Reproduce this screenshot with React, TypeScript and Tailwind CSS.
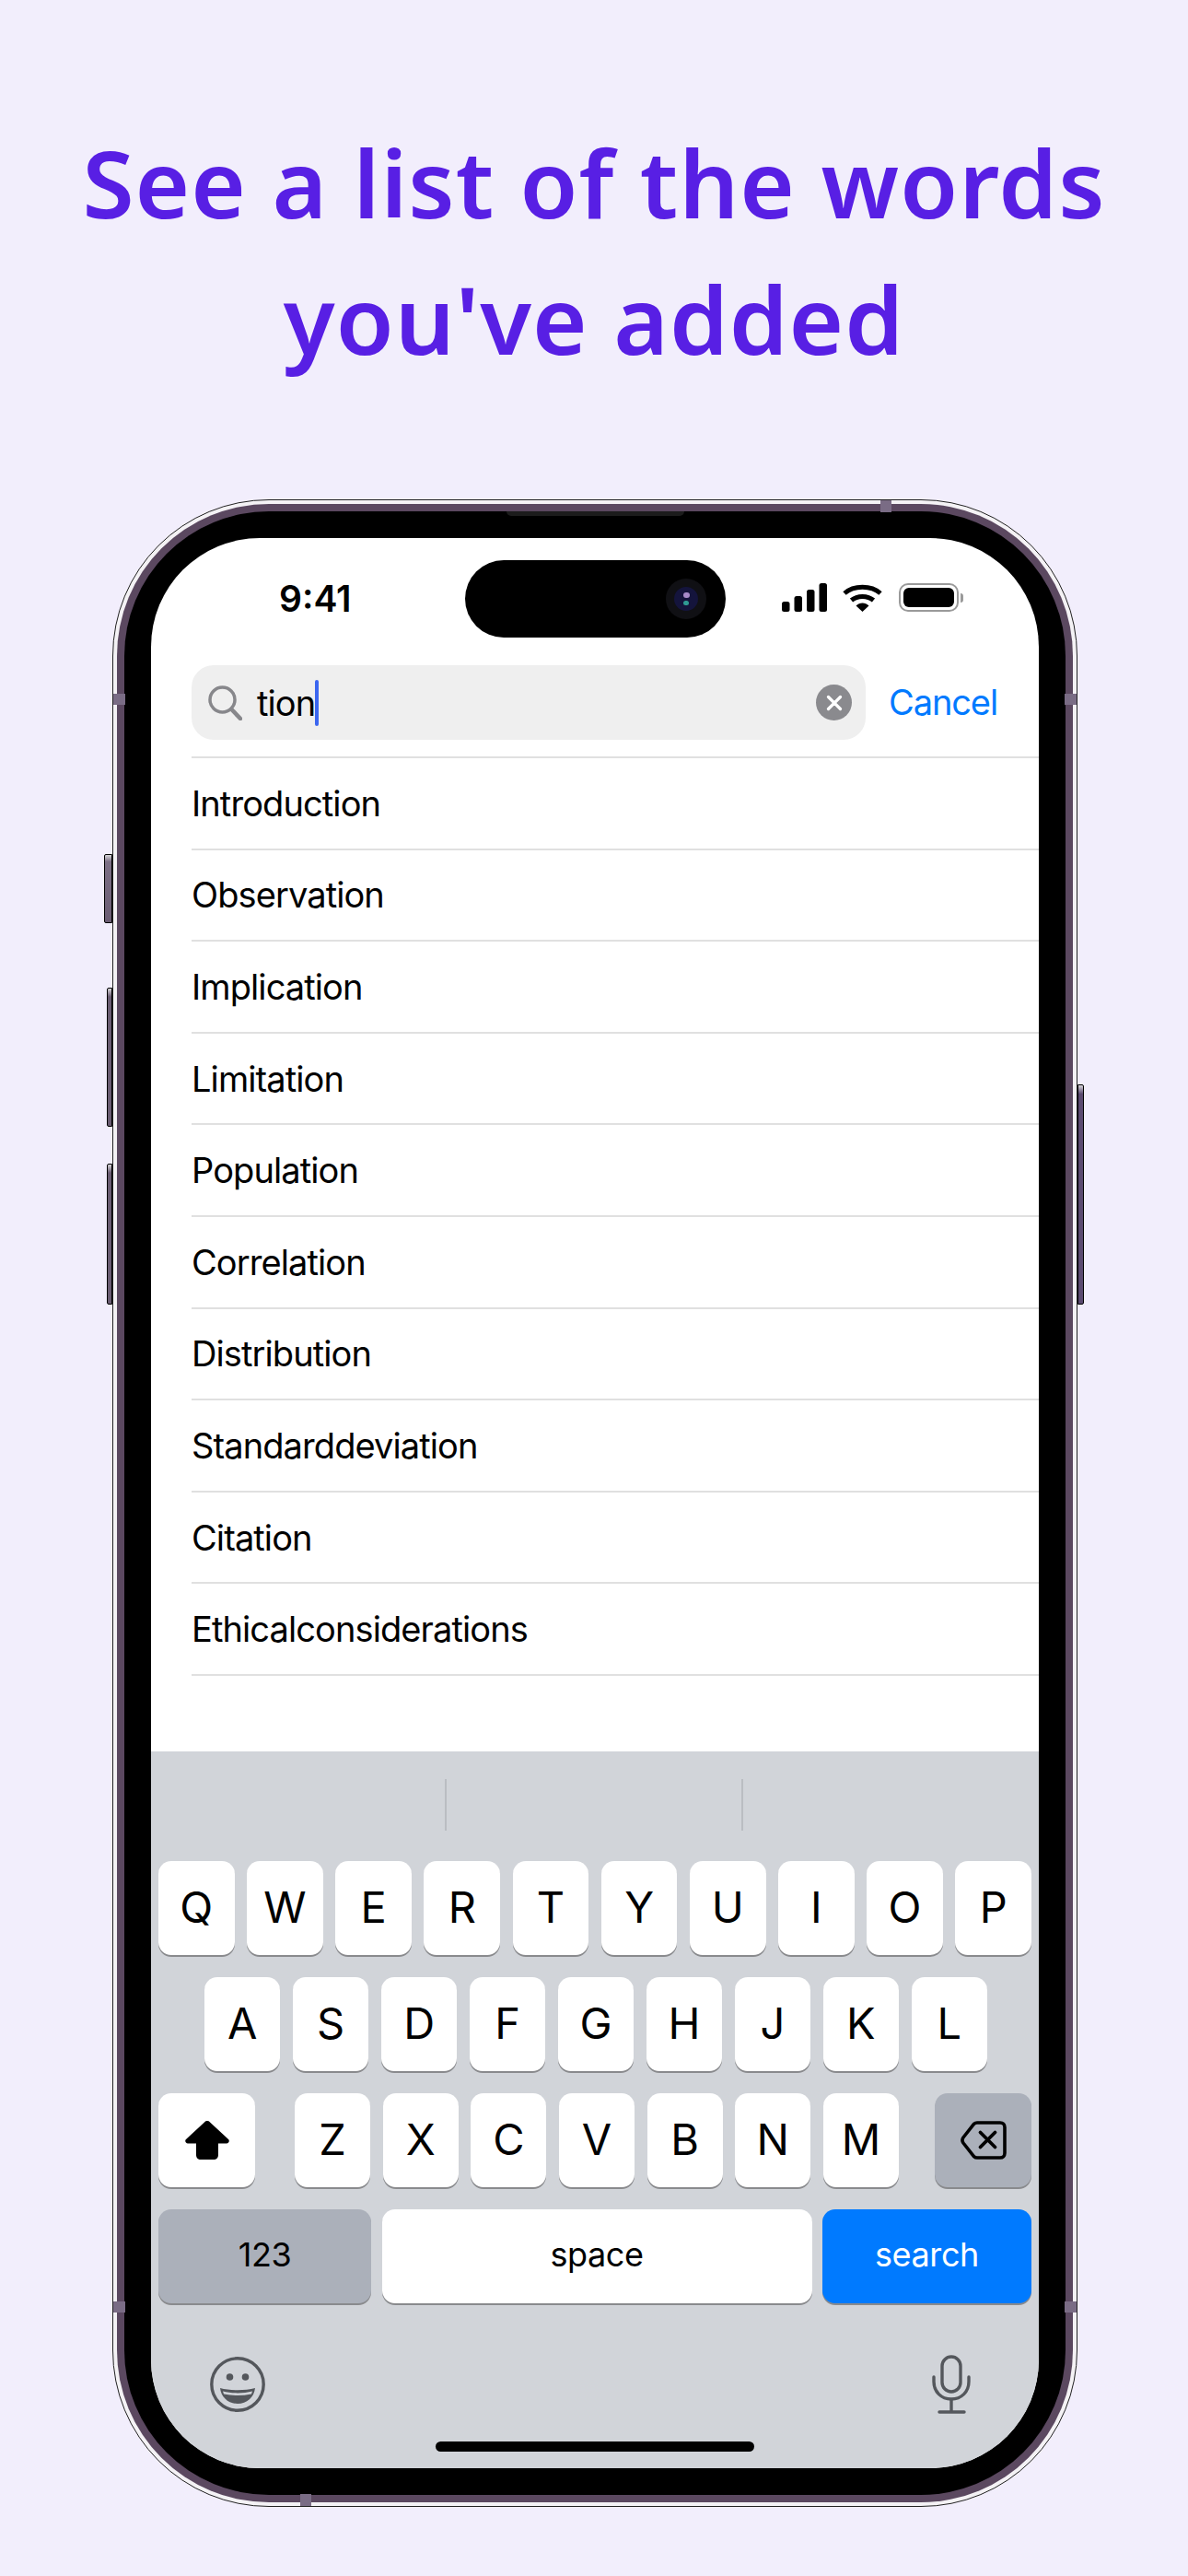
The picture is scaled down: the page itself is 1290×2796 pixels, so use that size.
import React from 'react';

const words = [
  'Introduction',
  'Observation',
  'Implication',
  'Limitation',
  'Population',
  'Correlation',
  'Distribution',
  'Standarddeviation',
  'Citation',
  'Ethicalconsiderations',
];

function Key({ label, className = '' }: { label: string; className?: string }) {
  return (
    <div
      className={`flex h-[102px] flex-1 items-center justify-center rounded-[14px] bg-white pb-[4px] text-[47px] leading-none text-black shadow-[0_2px_0_#898a8d] ${className}`}
    >
      {label}
    </div>
  );
}

function StatusIcons() {
  return (
    <div className="ml-[61px] mt-[49px] flex items-start">
      <svg width="49" height="31" viewBox="0 0 49 31" fill="black">
        <rect x="0" y="20" width="8.5" height="11" rx="2.5" />
        <rect x="13.5" y="14" width="8.5" height="17" rx="2.5" />
        <rect x="27" y="7" width="8.5" height="24" rx="2.5" />
        <rect x="40.5" y="0" width="8.5" height="31" rx="2.5" />
      </svg>
      <svg className="ml-[17px]" width="43" height="31" viewBox="0 0 43 31" fill="none" stroke="black">
        <path d="M2 11 C12 2 31 2 41 11" strokeWidth="5" />
        <path d="M9.5 18.5 C16 13 27 13 33.5 18.5" strokeWidth="5" />
        <path d="M14.5 24.5 C18.5 20.5 24.5 20.5 28.5 24.5 L21.5 31 Z" fill="black" stroke="none" />
      </svg>
      <div className="ml-[18px] flex items-center">
        <div className="h-[31px] w-[65px] rounded-[10px] border-2 border-[#9a9a9a] p-[3px]">
          <div className="h-full w-full rounded-[6px] bg-black" />
        </div>
        <div className="ml-[2px] h-[10px] w-[3px] rounded-r-full bg-[#9a9a9a]" />
      </div>
    </div>
  );
}

function SearchIcon() {
  return (
    <svg width="37" height="38" viewBox="0 0 37 38" fill="none" stroke="#87878b">
      <circle cx="15.5" cy="15.5" r="13.5" strokeWidth="3.5" />
      <path d="M25.5 26 L35 36" strokeWidth="4.5" strokeLinecap="round" />
    </svg>
  );
}

function ShiftIcon() {
  return (
    <svg width="48" height="42" viewBox="0 0 48 42" fill="black">
      <path
        d="M24 0 C25 0 26 .4 27 1.4 L47 20 C48.6 21.6 47.6 24.5 45 24.5 L36 24.5 L36 37 C36 40 34 42 31 42 L17 42 C14 42 12 40 12 37 L12 24.5 L3 24.5 C.4 24.5 -.6 21.6 1 20 L21 1.4 C22 .4 23 0 24 0 Z"
      />
    </svg>
  );
}

function DeleteIcon() {
  return (
    <svg width="50" height="42" viewBox="0 0 50 42" fill="none" stroke="black" strokeWidth="3.6">
      <path
        d="M18 2 L43 2 C46 2 48 4 48 7 L48 35 C48 38 46 40 43 40 L18 40 C16.5 40 15.5 39.5 14.5 38.6 L3 24 C1.6 22 1.6 20 3 18 L14.5 3.4 C15.5 2.5 16.5 2 18 2 Z"
        strokeLinejoin="round"
      />
      <path d="M21.5 12.5 L37.5 28.5 M37.5 12.5 L21.5 28.5" strokeWidth="3.8" strokeLinecap="round" />
    </svg>
  );
}

function EmojiIcon() {
  return (
    <svg width="60" height="60" viewBox="0 0 60 60" fill="none">
      <circle cx="30" cy="30" r="28.2" stroke="#54575c" strokeWidth="3.4" />
      <circle cx="21.5" cy="22" r="3.8" fill="#54575c" />
      <circle cx="38.5" cy="22" r="3.8" fill="#54575c" />
      <path d="M11 34 C22 37 38 37 49 34 C48 44 40 51 30 51 C20 51 12 44 11 34 Z" fill="#54575c" />
      <path d="M14 37.5 C24 40 36 40 46 37.5 L45 40.5 C35 42.5 25 42.5 15 40.5 Z" fill="#d1d4d9" />
    </svg>
  );
}

function MicIcon() {
  return (
    <svg width="42" height="64" viewBox="0 0 42 64" fill="none" stroke="#54575c" strokeWidth="3.4">
      <rect x="11" y="2" width="20" height="38" rx="10" />
      <path d="M2 24 L2 29 C2 40 10 48 21 48 C32 48 40 40 40 29 L40 24" strokeLinecap="round" />
      <path d="M21 48 L21 61" />
      <path d="M8 62 L35 62" strokeLinecap="round" />
    </svg>
  );
}

export default function App() {
  return (
    <div className="flex h-[2796px] w-[1290px] flex-col overflow-hidden bg-[#f2eefc] font-['Inter',sans-serif]">
      <h1 className="h-[542px] w-full pt-[124px] text-center font-['Noto_Sans',sans-serif] text-[102px] font-semibold leading-[148px] tracking-[1px] text-[#581fe4]">
        See a list of the words
        <br />
        you've added
      </h1>

      <div className="relative ml-[122px] h-[2179px] w-[1048px] rounded-[170px] border border-[#222222] bg-[#f4f2f5] p-[4px]">
        {/* side buttons */}
        <div className="absolute left-[-10px] top-[384px] h-[75px] w-[9px] rounded-l-[2px] border border-black bg-linear-to-b from-[#d8d6da] via-[#7c6f85] via-[10%] to-[#6a5c72]" />
        <div className="absolute left-[-7px] top-[529px] h-[151px] w-[6px] rounded-l-[2px] border border-black bg-linear-to-b from-[#d8d6da] via-[#6a5c72] via-[6%] to-[#6a5c72]" />
        <div className="absolute left-[-7px] top-[720px] h-[153px] w-[6px] rounded-l-[2px] border border-black bg-linear-to-b from-[#d8d6da] via-[#6a5c72] via-[6%] to-[#6a5c72]" />
        <div className="absolute right-[-8px] top-[634px] h-[239px] w-[7px] rounded-r-[2px] border border-black bg-linear-to-b from-[#d8d6da] via-[#5b4a70] via-[4%] to-[#5b4a70]" />

        <div className="h-full w-full rounded-[165px] bg-[#5b4860] p-[8px]">
          <div className="relative h-full w-full rounded-[157px] bg-black p-[29px]">
            {/* speaker slit */}
            <div className="absolute left-[415px] top-0 h-[5px] w-[193px] rounded-b-[6px] bg-[#1c1c1c]" />

            <div className="flex h-full w-full flex-col overflow-hidden rounded-[118px] bg-white">
              <div className="flex flex-1 flex-col">
                <div className="flex h-[138px] items-start">
                  <div className="ml-[139px] mt-[42px] w-[78px] text-[39px] font-semibold leading-[47px] text-black">9:41</div>
                  <div className="ml-[124px] mt-[24px] flex h-[84px] w-[283px] items-center justify-end rounded-full bg-black pr-[21px]">
                    <div className="flex h-[44px] w-[44px] items-center justify-center rounded-full bg-[#101014]">
                      <div className="flex h-[26px] w-[26px] flex-col items-center justify-center gap-[3px] rounded-full bg-[#14143c]">
                        <div className="h-[6px] w-[7px] rounded-full bg-[#a78ac9]" />
                        <div className="h-[5px] w-[6px] rounded-full bg-[#2f9a93]" />
                      </div>
                    </div>
                  </div>
                  <StatusIcons />
                </div>

                <div className="flex items-center pl-[44px]">
                  <div className="flex h-[81px] w-[732px] items-center rounded-[24px] bg-[#efefef] pl-[18px] pr-[15px]">
                    <SearchIcon />
                    <div className="ml-[16px] flex items-center">
                      <span className="text-[38px] leading-none tracking-[-0.9px] text-black">tion</span>
                      <div className="h-[50px] w-[4px] rounded-full bg-[#3b66f0]" />
                    </div>
                    <div className="ml-auto flex h-[39px] w-[39px] items-center justify-center rounded-full bg-[#8a8a8e]">
                      <svg width="18" height="18" viewBox="0 0 18 18" stroke="white" strokeWidth="3.2" strokeLinecap="round">
                        <path d="M2.5 2.5 L15.5 15.5 M15.5 2.5 L2.5 15.5" />
                      </svg>
                    </div>
                  </div>
                  <span className="ml-[25px] pb-[2px] text-[38px] leading-none tracking-[-1.1px] text-[#007aff]">Cancel</span>
                </div>

                <div className="mt-[18px] pl-[44px]">
                  {words.map((word) => (
                    <div
                      key={word}
                      className="flex h-[99.6px] items-center border-t-2 border-[#e0e0e0] text-[38px] leading-none tracking-[-0.9px] text-black"
                    >
                      {word}
                    </div>
                  ))}
                  <div className="border-t-2 border-[#e0e0e0]" />
                </div>
              </div>

              <div className="h-[778px] bg-[#d1d4d9]">
                <div className="flex h-[119px] items-start justify-center gap-[320px] pr-[2px] pt-[30px]">
                  <div className="h-[56px] w-[2px] bg-[#babdc2]" />
                  <div className="h-[56px] w-[2px] bg-[#babdc2]" />
                </div>

                <div className="flex flex-col gap-[24px] px-[8px]">
                  <div className="flex gap-[13.5px]">
                    {'QWERTYUIOP'.split('').map((k) => (
                      <Key key={k} label={k} />
                    ))}
                  </div>
                  <div className="flex gap-[13.5px] pl-[50px] pr-[48px]">
                    {'ASDFGHJKL'.split('').map((k) => (
                      <Key key={k} label={k} />
                    ))}
                  </div>
                  <div className="flex items-center">
                    <div className="flex h-[102px] w-[105px] items-center justify-center rounded-[14px] bg-white shadow-[0_2px_0_#898a8d]">
                      <ShiftIcon />
                    </div>
                    <div className="ml-[43px] flex w-[656px] gap-[13.5px]">
                      {'ZXCVBNM'.split('').map((k) => (
                        <Key key={k} label={k} />
                      ))}
                    </div>
                    <div className="ml-auto flex h-[102px] w-[105px] items-center justify-center rounded-[14px] bg-[#abb0ba] shadow-[0_2px_0_#898a8d]">
                      <DeleteIcon />
                    </div>
                  </div>
                  <div className="flex gap-[11.5px] text-[36px] leading-none tracking-[-0.4px]">
                    <div className="flex h-[102px] w-[231px] items-center justify-center rounded-[14px] bg-[#abb0ba] pb-[4px] text-black shadow-[0_2px_0_#898a8d]">
                      123
                    </div>
                    <div className="flex h-[102px] flex-1 items-center justify-center rounded-[14px] bg-white pb-[4px] text-black shadow-[0_2px_0_#898a8d]">
                      space
                    </div>
                    <div className="flex h-[102px] w-[227px] items-center justify-center rounded-[14px] bg-[#007aff] pb-[4px] text-white shadow-[0_2px_0_#898a8d]">
                      search
                    </div>
                  </div>
                </div>

                <div className="mt-[56px] flex items-start justify-between pl-[64px] pr-[74px]">
                  <div className="pt-[2px]">
                    <EmojiIcon />
                  </div>
                  <MicIcon />
                </div>
                <div className="mx-auto mt-[30px] h-[11px] w-[346px] rounded-full bg-black" />
              </div>
            </div>
          </div>
        </div>

        {/* antenna bands */}
        <div className="absolute left-[833px] top-0 h-[13px] w-[12px] bg-[#7a6c85]" />
        <div className="absolute bottom-0 left-[203px] h-[13px] w-[12px] bg-[#7a6c85]" />
        <div className="absolute left-0 top-[210px] h-[12px] w-[13px] bg-[#7a6c85]" />
        <div className="absolute bottom-[210px] left-0 h-[12px] w-[13px] bg-[#7a6c85]" />
        <div className="absolute right-0 top-[210px] h-[12px] w-[13px] bg-[#7a6c85]" />
        <div className="absolute bottom-[210px] right-0 h-[12px] w-[13px] bg-[#7a6c85]" />
      </div>
    </div>
  );
}
